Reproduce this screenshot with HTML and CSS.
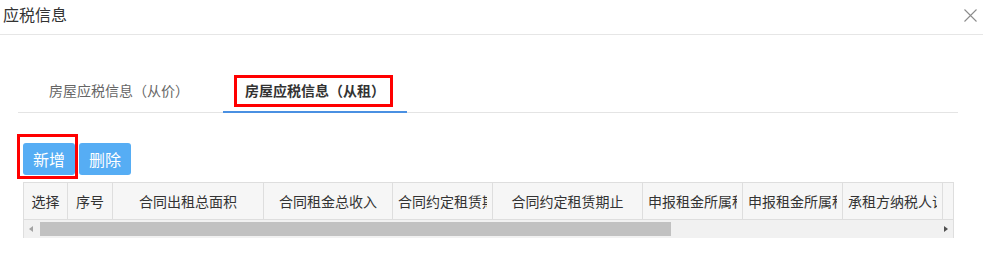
FILE: index.html
```html
<!DOCTYPE html>
<html lang="zh-CN">
<head>
<meta charset="utf-8">
<title>应税信息</title>
<link rel="stylesheet" href="styles.css">
</head>
<body>
<div class="dialog">
  <div class="dialog-header">
    <span class="dialog-title">应税信息</span>
    <svg class="close" width="13" height="13" viewBox="0 0 13 13"><path d="M0.5 0.5L12.5 12.5M12.5 0.5L0.5 12.5" stroke="#8c8c8c" stroke-width="1.1" fill="none"/></svg>
  </div>
  <div class="tabs">
    <div class="tab first">房屋应税信息（从价）</div>
    <div class="tab active">房屋应税信息（从租）<span class="mark mark-tab"></span></div>
  </div>
  <div class="toolbar">
    <button class="btn">新增<span class="mark mark-btn"></span></button>
    <button class="btn">删除</button>
  </div>
  <div class="grid">
    <div class="grid-head">
      <div class="cell w44"><div class="txt">选择</div></div>
      <div class="cell w45"><div class="txt">序号</div></div>
      <div class="cell w151"><div class="txt">合同出租总面积</div></div>
      <div class="cell w129"><div class="txt">合同租金总收入</div></div>
      <div class="cell w100"><div class="txt">合同约定租赁期起</div></div>
      <div class="cell w150"><div class="txt">合同约定租赁期止</div></div>
      <div class="cell w100"><div class="txt">申报租金所属租赁期起</div></div>
      <div class="cell w100"><div class="txt">申报租金所属租赁期止</div></div>
      <div class="cell w100"><div class="txt">承租方纳税人识别号</div></div>
      <div class="cell w150"><div class="txt">承租方名称</div></div>
    </div>
    <div class="hscroll">
      <span class="arrow left"></span>
      <div class="track"><div class="thumb"></div></div>
      <span class="arrow right"></span>
    </div>
  </div>
</div>
</body>
</html>
```
FILE: styles.css
```css
* { box-sizing: border-box; }
body {
  margin: 0;
  background: #fff;
  font-family: "Noto Sans CJK SC", "Noto Sans", "Liberation Sans", sans-serif;
  color: #333;
}
.dialog { width: 983px; }
.dialog-header {
  display: flex;
  justify-content: space-between;
  align-items: flex-start;
  padding: 4px 6px 10px 3px;
  border-bottom: 1px solid #e6e6e6;
  height: 35px;
}
.dialog-title {
  font-size: 16px;
  line-height: 20px;
  color: #333;
}
.close { margin-top: 5px; }
.tabs {
  display: flex;
  margin: 36px 25px 0 18px;
  border-bottom: 1px solid #e4e4e4;
}
.tab {
  position: relative;
  font-size: 14px;
  line-height: 20px;
  padding: 9px 22px 11px;
  border-bottom: 2px solid transparent;
  margin-bottom: -1px;
  color: #666;
  white-space: nowrap;
}
.tab.first { margin-left: 9px; margin-right: 12px; }
.tab.active {
  color: #333;
  font-weight: bold;
  border-bottom-color: #4a90e2;
}
.mark {
  position: absolute;
  border: 3px solid #ff0000;
  pointer-events: none;
}
.mark-tab { left: 11px; top: 4px; width: 159px; height: 32px; }
.toolbar {
  display: flex;
  gap: 4px;
  margin: 30px 0 0 23px;
}
.btn {
  position: relative;
  width: 52px;
  height: 32px;
  border: none;
  border-radius: 3px;
  background: #56adf4;
  color: #fff;
  font-family: inherit;
  font-size: 16px;
  line-height: 20px;
  padding: 0;
}
.mark-btn { left: -6px; top: -9px; width: 61px; height: 45px; }
.grid {
  margin: 7px 0 0 23px;
  width: 931px;
  border: 1px solid #dedede;
  border-bottom: none;
  overflow: hidden;
}
.grid-head {
  display: flex;
  background: #f6f6f6;
  border-bottom: 1px solid #dedede;
}
.cell {
  flex: none;
  height: 36px;
  border-right: 1px solid #dedede;
  display: flex;
  align-items: center;
  overflow: hidden;
}
.txt {
  flex: 1;
  min-width: 0;
  margin: 0 5px;
  overflow: hidden;
  white-space: nowrap;
  text-align: center;
  font-size: 14px;
  line-height: 20px;
  color: #333;
}
.w44 { width: 44px; }
.w45 { width: 45px; }
.w151 { width: 151px; }
.w129 { width: 129px; }
.w100 { width: 100px; }
.w150 { width: 150px; }
.hscroll {
  display: flex;
  align-items: center;
  height: 18px;
  background: #f1f1f1;
}
.arrow {
  flex: none;
  width: 15px;
  height: 18px;
  position: relative;
}
.arrow::before {
  content: "";
  position: absolute;
  top: 6px;
  border-top: 3px solid transparent;
  border-bottom: 3px solid transparent;
}
.arrow.left::before { left: 5px; border-right: 4px solid #a3a3a3; }
.arrow.right::before { left: 6px; border-left: 4px solid #505050; }
.track { flex: 1; height: 18px; padding: 2px 0; }
.thumb {
  width: 631px;
  height: 14px;
  margin-left: 1px;
  background: #c1c1c1;
}
```
